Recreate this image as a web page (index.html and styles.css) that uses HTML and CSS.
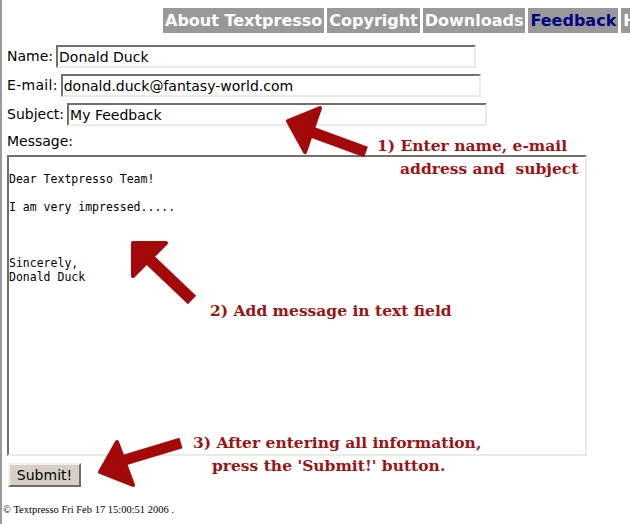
FILE: index.html
```html
<!DOCTYPE html>
<html>
<head>
<meta charset="utf-8">
<link rel="stylesheet" href="styles.css">
</head>
<body>
<div class="page">
  <nav class="tabs">
    <span class="tab">About Textpresso</span>
    <span class="tab">Copyright</span>
    <span class="tab">Downloads</span>
    <span class="tab current">Feedback</span>
    <span class="tab">Help</span>
  </nav>
  <form class="form">
    <div class="row"><label>Name:</label><input class="field" type="text" value="Donald Duck"></div>
    <div class="row"><label class="wide">E-mail:</label><input class="field" type="text" value="donald.duck@fantasy-world.com"></div>
    <div class="row"><label>Subject:</label><input class="field" type="text" value="My Feedback"></div>
    <div class="msg-label">Message:</div>
    <textarea class="message">

Dear Textpresso Team!

I am very impressed.....



Sincerely,
Donald Duck</textarea>
    <button class="submit" type="button">Submit!</button>
  </form>
  <div class="footer">© Textpresso Fri Feb 17 15:00:51 2006 .</div>

  <svg class="arrows" width="630" height="524" viewBox="0 0 630 524">
    <g fill="#a30909" stroke="#a30909" stroke-linejoin="round">
      <polygon points="288,121 320,108 305,152" stroke-width="4"/>
      <line x1="306" y1="130" x2="366" y2="152" stroke-width="11"/>
      <polygon points="133,243 166,243 133,276" stroke-width="4"/>
      <line x1="150" y1="260" x2="192" y2="300" stroke-width="12"/>
      <polygon points="117,442 100,472 133,485" stroke-width="4"/>
      <line x1="118" y1="462" x2="181" y2="443" stroke-width="11"/>
    </g>
  </svg>
  <div class="note n1a">1) Enter name, e-mail</div>
  <div class="note n1b">address and  subject</div>
  <div class="note n2">2) Add message in text field</div>
  <div class="note n3a">3) After entering all information,</div>
  <div class="note n3b">press the 'Submit!' button.</div>
</div>
</body>
</html>
```
FILE: styles.css
```css
html, body {
  margin: 0;
  padding: 0;
  background: #fff;
}
body {
  font-family: "DejaVu Sans", Verdana, sans-serif;
  font-size: 14px;
  color: #000;
  overflow: hidden;
}
.page {
  position: relative;
  width: 630px;
  height: 524px;
  box-sizing: border-box;
  border-left: 2px solid #9a9a9a;
  overflow: hidden;
}
.tabs {
  display: flex;
  gap: 3px;
  padding: 8px 0 0 161px;
  white-space: nowrap;
}
.tab {
  flex: none;
  background: #999;
  color: #fff;
  font-weight: bold;
  font-size: 16px;
  height: 25px;
  line-height: 25px;
  padding: 0 2px;
}
.tab.current {
  color: #000080;
}
.form {
  margin: 12px 0 0 5px;
  display: flex;
  flex-direction: column;
  align-items: flex-start;
}
.row {
  display: flex;
  align-items: center;
  gap: 3px;
  height: 23px;
  margin-bottom: 6px;
}
.row label {
  line-height: 23px;
}
.row label.wide {
  letter-spacing: 0.3px;
}
.field {
  width: 420px;
  height: 23px;
  box-sizing: border-box;
  margin: 0;
  padding: 0 1px;
  font-family: "DejaVu Sans", Verdana, sans-serif;
  font-size: 14px;
  color: #000;
  border-style: solid;
  border-width: 2px;
  border-color: #72706a #eceae5 #eceae5 #72706a;
  background: #fff;
  outline: none;
}
.msg-label {
  margin-top: -1px;
  line-height: 20px;
}
.message {
  margin-top: 4px;
  width: 580px;
  height: 301px;
  box-sizing: border-box;
  padding: 1px 0;
  font-family: "DejaVu Sans Mono", monospace;
  font-size: 11.5px;
  line-height: 14px;
  color: #000;
  border-style: solid;
  border-width: 2px;
  border-color: #72706a #eceae5 #eceae5 #72706a;
  resize: none;
  overflow: hidden;
  outline: none;
}
.submit {
  margin: 7px 0 0 1px;
  width: 73px;
  height: 24px;
  padding: 0;
  font-family: "DejaVu Sans", Verdana, sans-serif;
  font-size: 14px;
  color: #000;
  background: #d6d0c4;
  border-style: solid;
  border-width: 2px;
  border-color: #f2f0ec #6f6d68 #6f6d68 #f2f0ec;
}
.footer {
  margin: 16px 0 0 1px;
  font-family: "Liberation Serif", "Times New Roman", serif;
  font-size: 10.5px;
  line-height: 14px;
}
.arrows {
  position: absolute;
  left: -2px;
  top: 0;
  pointer-events: none;
}
.note {
  position: absolute;
  font-family: "DejaVu Serif", Georgia, serif;
  font-weight: bold;
  font-size: 15.5px;
  line-height: 20px;
  color: #9a1414;
  white-space: pre;
}
.n1a { left: 375px; top: 136px; }
.n1b { left: 398px; top: 159px; }
.n2 { left: 208px; top: 301px; }
.n3a { left: 191px; top: 433px; }
.n3b { left: 210px; top: 456px; }
```
